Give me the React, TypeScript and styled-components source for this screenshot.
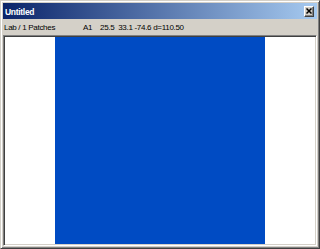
import React from "react";
import styled, { createGlobalStyle } from "styled-components";

const Global = createGlobalStyle`
  html, body { margin: 0; padding: 0; background: #d4d0c8; }
  * { box-sizing: border-box; }
`;

const Window = styled.div`
  width: 320px;
  height: 249px;
  background: #d4d0c8;
  border: 1px solid;
  border-color: #d4d0c8 #404040 #404040 #d4d0c8;
  box-shadow: inset 1px 1px #ffffff, inset -1px -1px #808080;
  padding: 2px;
  display: flex;
  flex-direction: column;
  font-family: "Liberation Sans", Arial, sans-serif;
  font-size: 8px;
  color: #000;
`;

const TitleBar = styled.div`
  height: 16px;
  flex: none;
  display: flex;
  align-items: center;
  justify-content: space-between;
  padding: 0 3px 0 2px;
  background: linear-gradient(to right, #0a246a, #a6caf0);
`;

const Title = styled.span`
  color: #fff;
  font-weight: bold;
  font-size: 8.5px;
  letter-spacing: -0.3px;
  line-height: 12px;
  padding-top: 1px;
`;

const CloseButton = styled.div`
  width: 10px;
  height: 11px;
  background: #d4d0c8;
  border: 1px solid;
  border-color: #ffffff #404040 #404040 #ffffff;
  box-shadow: inset -1px -1px #808080;
  display: flex;
  align-items: center;
  justify-content: center;
`;

const InfoRow = styled.div`
  height: 16px;
  flex: none;
  display: flex;
  align-items: center;
  padding: 2px 0 0 1px;
  line-height: 10px;
  letter-spacing: -0.3px;
  white-space: pre;
`;

const InfoCell = styled.span<{ $w?: number }>`
  width: ${(p) => (p.$w ? `${p.$w}px` : "auto")};
  flex: none;
`;

const Canvas = styled.div`
  flex: 1;
  background: #ffffff;
  border: 1px solid;
  border-color: #808080 #ffffff #ffffff #808080;
  box-shadow: inset 1px 1px #404040, inset -1px -1px #d4d0c8;
  padding: 1px;
  display: flex;
  justify-content: center;
  align-items: stretch;
`;

const Patch = styled.div<{ $color: string }>`
  width: 210px;
  background: ${(p) => p.$color};
`;

export default function App() {
  return (
    <>
      <Global />
      <Window>
        <TitleBar>
          <Title>Untitled</Title>
          <CloseButton>
            <svg width="6" height="6" viewBox="0 0 6 6">
              <path d="M0.5 0.5 L5.5 5.5 M5.5 0.5 L0.5 5.5" stroke="#000" strokeWidth="1.5" />
            </svg>
          </CloseButton>
        </TitleBar>
        <InfoRow>
          <InfoCell $w={79}>Lab / 1 Patches</InfoCell>
          <InfoCell $w={17}>A1</InfoCell>
          <InfoCell>25.5  33.1 -74.6 d=110.50</InfoCell>
        </InfoRow>
        <Canvas>
          <Patch $color="#004bc3" />
        </Canvas>
      </Window>
    </>
  );
}
